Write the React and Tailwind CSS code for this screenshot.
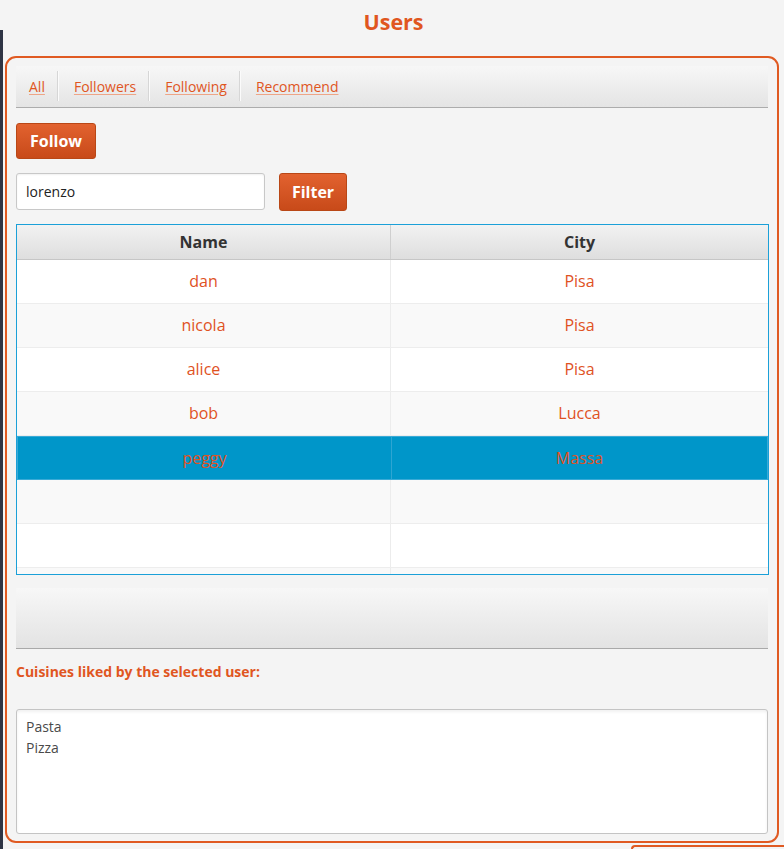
import React, { useState } from 'react';

const users = [
  { name: 'dan', city: 'Pisa' },
  { name: 'nicola', city: 'Pisa' },
  { name: 'alice', city: 'Pisa' },
  { name: 'bob', city: 'Lucca' },
  { name: 'peggy', city: 'Massa' },
];

const tabs = ['All', 'Followers', 'Following', 'Recommend'];

const App = () => {
  const [selected, setSelected] = useState(4);
  const [query, setQuery] = useState('lorenzo');

  // pad the table with empty rows like the JavaFX TableView does
  const rows = [...users, null, null, null];

  return (
    <div className="flex h-[849px] w-[784px] overflow-hidden bg-[#f4f4f4] font-['Open_Sans',sans-serif]">
      {/* edge of the window behind */}
      <div className="w-[3px] shrink-0 pt-[30px]">
        <div className="h-full bg-[#2e3444]" />
      </div>

      <div className="flex flex-1 flex-col">
        {/* Title */}
        <div className="flex h-[56px] justify-center pt-[8px]">
          <h1 className="text-[21.5px] font-bold leading-[28px] text-[#e0561f]">Users</h1>
        </div>

        {/* Main panel */}
        <div className="ml-[2px] mr-[5px] flex h-[788px] flex-col rounded-[11px] border-2 border-[#e05a22] px-[9px] pb-[7px] pt-[8px]">
          {/* Tab bar */}
          <div className="flex h-[42px] shrink-0 items-center border-b border-[#acacac] bg-gradient-to-b from-[#f7f7f7] to-[#e4e4e4]">
            {tabs.map((t, i) => (
              <div key={t} className="flex h-[30px] items-center">
                {i > 0 && <div className="h-full w-[2px] border-l border-r border-l-[#d6d6d6] border-r-[#fbfbfb]" />}
                <a className={`${i === 0 ? 'pl-[13px]' : 'pl-[15px]'} pr-[12px] text-[14px] text-[#e0561f] underline decoration-[#eea587] underline-offset-2`}>
                  {t}
                </a>
              </div>
            ))}
          </div>

          {/* Follow */}
          <div className="mt-[15px] flex shrink-0">
            <button className="h-[36px] w-[80px] rounded-[3px] border border-[#b94716] bg-gradient-to-b from-[#e2622f] to-[#c84a19] text-[16px] font-bold text-white">
              Follow
            </button>
          </div>

          {/* Filter row */}
          <div className="mt-[14px] flex h-[38px] shrink-0 items-start gap-[14px]">
            <input
              value={query}
              onChange={(e) => setQuery(e.target.value)}
              className="h-[37px] w-[249px] rounded-[3px] border border-[#c8c8c8] bg-white px-[9px] text-[14px] text-[#222] shadow-[inset_0_1px_2px_rgba(0,0,0,0.06)] outline-none"
            />
            <button className="h-[38px] w-[68px] rounded-[3px] border border-[#b94716] bg-gradient-to-b from-[#e2622f] to-[#c84a19] text-[16px] font-bold text-white">
              Filter
            </button>
          </div>

          {/* Table */}
          <div className="mt-[13px] mr-[-1px] flex h-[351px] shrink-0 flex-col overflow-hidden border border-[#1ba0d8] bg-white">
            <div className="grid h-[35px] shrink-0 grid-cols-[374px_1fr] border-b border-[#c6c6c6] bg-gradient-to-b from-[#f2f2f2] to-[#dedede]">
              <div className="flex items-center justify-center border-r border-[#cfcfcf] text-[16px] font-bold text-[#333]">Name</div>
              <div className="flex items-center justify-center text-[16px] font-bold text-[#333]">City</div>
            </div>
            <div className="flex-1 overflow-hidden">
              {rows.map((r, i) => {
                const isSel = r && i === selected;
                return (
                  <div
                    key={i}
                    onClick={() => r && setSelected(i)}
                    className={`grid h-[44px] grid-cols-[374px_1fr] border-b ${
                      isSel
                        ? 'border border-[#3aaad6] bg-[#0096c9]'
                        : i % 2 === 0
                        ? 'border-[#ededed] bg-white'
                        : 'border-[#ededed] bg-[#f9f9f9]'
                    }`}
                  >
                    <div className={`flex items-center justify-center border-r text-[16px] text-[#e0521f] ${isSel ? 'border-[#2ea5d2]' : 'border-[#ececec]'}`}>
                      {r ? r.name : ''}
                    </div>
                    <div className="flex items-center justify-center text-[16px] text-[#e0521f]">{r ? r.city : ''}</div>
                  </div>
                );
              })}
            </div>
          </div>

          {/* Empty toolbar */}
          <div className="mt-[13px] h-[61px] shrink-0 border-b border-[#a9a9a9] bg-gradient-to-b from-[#f7f7f7] to-[#e3e3e3]" />

          {/* Cuisines */}
          <p className="mt-[13px] text-[14px] font-bold leading-[20px] text-[#e0561f]">Cuisines liked by the selected user:</p>

          <div className="mt-[27px] h-[125px] shrink-0 rounded-[3px] border border-[#c4c4c4] bg-white px-[9px] py-[6px] shadow-[inset_0_2px_3px_rgba(0,0,0,0.06)]">
            <p className="text-[14px] leading-[21px] text-[#4a4a4a]">Pasta</p>
            <p className="text-[14px] leading-[21px] text-[#4a4a4a]">Pizza</p>
          </div>
        </div>

        {/* top edge of another panel peeking in */}
        <div className="flex justify-end">
          <div className="mt-[2px] h-[4px] w-[153px] rounded-tl-[4px] border-l-2 border-t-2 border-[#e05a22]" />
        </div>
      </div>
    </div>
  );
};

export default App;
